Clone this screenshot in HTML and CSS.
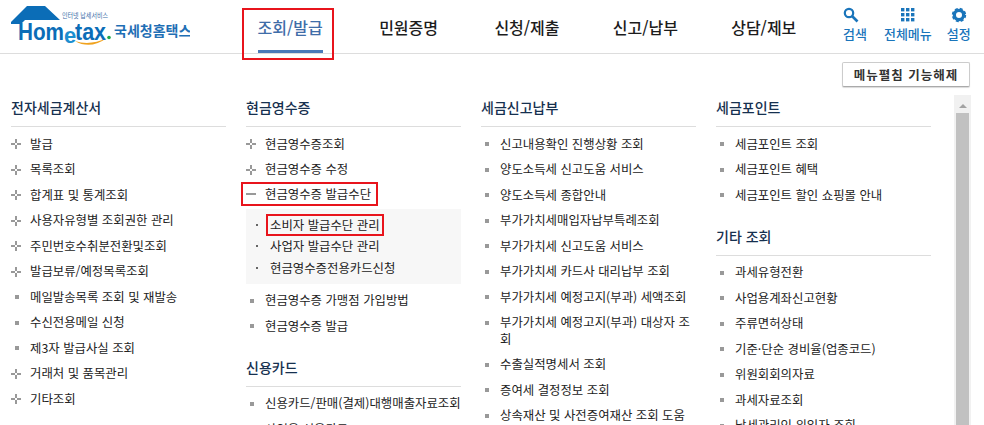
FILE: index.html
```html
<!DOCTYPE html>
<html lang="ko">
<head>
    <meta charset="UTF-8">
    <title>Hometax</title>
    <link rel="stylesheet" href="styles.css">
</head>
<body>
    <div class="header">
        <a class="logo" href="#">
            <svg width="190" height="50" viewBox="0 0 190 50">
                <path d="M11 22 L27 6 L45 6 L60 20 L25 20 L21 24 L11 24 Z" fill="#0b6db7"/>
                <path d="M75 41 Q90 50 107 38 Q90 46 75 41 Z" fill="#f0a21e"/>
                <circle cx="109" cy="37.5" r="1.8" fill="#1fa84a"/>
                <text x="62" y="18" class="logo-small" textLength="46" lengthAdjust="spacingAndGlyphs">인터넷 납세서비스</text>
                <text x="18" y="40" class="logo-home" textLength="46" lengthAdjust="spacingAndGlyphs">Hom</text>
                <text x="64" y="43" class="logo-e">e</text>
                <text x="75" y="40" class="logo-home" textLength="31" lengthAdjust="spacingAndGlyphs">tax</text>
                <text x="114" y="36" class="logo-name">국세청홈택스</text>
            </svg>
        </a>
        <div class="nav">
            <a class="nav-item active" href="#"><span>조회/발급</span></a>
            <a class="nav-item" href="#"><span>민원증명</span></a>
            <a class="nav-item" href="#"><span>신청/제출</span></a>
            <a class="nav-item" href="#"><span>신고/납부</span></a>
            <a class="nav-item" href="#"><span>상담/제보</span></a>
        </div>
        <div class="tools">
            <a class="tool tool-search" href="#">
                <svg width="16" height="16" viewBox="0 0 16 16"><circle cx="6" cy="6" r="4.2" fill="none" stroke="#1a75bb" stroke-width="2.2"/><path d="M9 9 L14.5 14.5" stroke="#1a75bb" stroke-width="2.6"/></svg>
                검색
            </a>
            <a class="tool" href="#">
                <svg width="16" height="16" viewBox="0 0 16 16" fill="#1a75bb">
                    <rect x="1" y="1" width="3.4" height="3.4"/><rect x="6" y="1" width="3.4" height="3.4"/><rect x="11" y="1" width="3.4" height="3.4"/>
                    <rect x="1" y="6" width="3.4" height="3.4"/><rect x="6" y="6" width="3.4" height="3.4"/><rect x="11" y="6" width="3.4" height="3.4"/>
                    <rect x="1" y="11" width="3.4" height="3.4"/><rect x="6" y="11" width="3.4" height="3.4"/><rect x="11" y="11" width="3.4" height="3.4"/>
                </svg>
                전체메뉴
            </a>
            <a class="tool" href="#">
                <svg width="16" height="16" viewBox="0 0 16 16"><circle cx="8" cy="8" r="4.6" fill="none" stroke="#1a75bb" stroke-width="3.2"/><circle cx="8" cy="8" r="6.4" fill="none" stroke="#1a75bb" stroke-width="1.6" stroke-dasharray="3 2.03"/></svg>
                설정
            </a>
        </div>
    </div>

    <div class="toolbar">
        <button class="btn-fold">메뉴펼침 기능해제</button>
    </div>

    <div class="panel">
        <div class="columns">
            <div class="col">
                <h3>전자세금계산서</h3>
                <ul class="menu">
                    <li class="plus">발급</li>
                    <li class="plus">목록조회</li>
                    <li class="plus">합계표 및 통계조회</li>
                    <li class="plus">사용자유형별 조회권한 관리</li>
                    <li class="plus">주민번호수취분전환및조회</li>
                    <li class="plus">발급보류/예정목록조회</li>
                    <li class="square">메일발송목록 조회 및 재발송</li>
                    <li class="square">수신전용메일 신청</li>
                    <li class="square">제3자 발급사실 조회</li>
                    <li class="plus">거래처 및 품목관리</li>
                    <li class="plus">기타조회</li>
                </ul>
            </div>

            <div class="col">
                <h3>현금영수증</h3>
                <ul class="menu">
                    <li class="plus">현금영수증조회</li>
                    <li class="plus">현금영수증 수정</li>
                    <li class="minus marked">현금영수증 발급수단</li>
                </ul>
                <ul class="sub">
                    <li><span class="marked">소비자 발급수단 관리</span></li>
                    <li><span>사업자 발급수단 관리</span></li>
                    <li><span>현금영수증전용카드신청</span></li>
                </ul>
                <ul class="menu">
                    <li class="square">현금영수증 가맹점 가입방법</li>
                    <li class="square">현금영수증 발급</li>
                </ul>
                <h3>신용카드</h3>
                <ul class="menu">
                    <li class="square">신용카드/판매(결제)대행매출자료조회</li>
                    <li class="square">사업용 신용카드</li>
                </ul>
            </div>

            <div class="col">
                <h3>세금신고납부</h3>
                <ul class="menu">
                    <li class="square">신고내용확인 진행상황 조회</li>
                    <li class="square">양도소득세 신고도움 서비스</li>
                    <li class="square">양도소득세 종합안내</li>
                    <li class="square">부가가치세매입자납부특례조회</li>
                    <li class="square">부가가치세 신고도움 서비스</li>
                    <li class="square">부가가치세 카드사 대리납부 조회</li>
                    <li class="square">부가가치세 예정고지(부과) 세액조회</li>
                    <li class="square">부가가치세 예정고지(부과) 대상자 조회</li>
                    <li class="square">수출실적명세서 조회</li>
                    <li class="square">증여세 결정정보 조회</li>
                    <li class="square">상속재산 및 사전증여재산 조회 도움</li>
                </ul>
            </div>

            <div class="col">
                <h3>세금포인트</h3>
                <ul class="menu">
                    <li class="square">세금포인트 조회</li>
                    <li class="square">세금포인트 혜택</li>
                    <li class="square">세금포인트 할인 쇼핑몰 안내</li>
                </ul>
                <h3>기타 조회</h3>
                <ul class="menu">
                    <li class="square">과세유형전환</li>
                    <li class="square">사업용계좌신고현황</li>
                    <li class="square">주류면허상태</li>
                    <li class="square">기준·단순 경비율(업종코드)</li>
                    <li class="square">위원회회의자료</li>
                    <li class="square">과세자료조회</li>
                    <li class="square">납세관리인 위임자 조회</li>
                </ul>
            </div>
        </div>

        <div class="scrollbar">
            <div class="scroll-arrow"></div>
            <div class="scroll-thumb"></div>
        </div>
    </div>
</body>
</html>
```

FILE: styles.css
```css
* {
    box-sizing: border-box;
}

html, body {
    height: 100%;
}

body {
    margin: 0;
    display: flex;
    flex-direction: column;
    overflow: hidden;
    background-color: #fff;
    color: #222;
    font-family: "Noto Sans CJK KR", "Liberation Sans", sans-serif;
    font-size: 12.4px;
}

a {
    color: inherit;
    text-decoration: none;
}

ul {
    list-style: none;
    margin: 0;
    padding: 0;
}

/* header */
.header {
    display: flex;
    flex: none;
    height: 54px;
    border-bottom: 1px solid #ddd;
}

.logo {
    flex: none;
    width: 231px;
    height: 50px;
}

.logo svg {
    display: block;
}

.logo-small {
    font-size: 6.5px;
    fill: #3b6ea8;
}

.logo-home {
    font-family: "Liberation Sans", sans-serif;
    font-size: 24px;
    font-weight: bold;
    fill: #0b6db7;
}

.logo-e {
    font-family: "Liberation Sans", sans-serif;
    font-size: 22px;
    font-weight: bold;
    fill: #1d8fd0;
}

.logo-name {
    font-size: 14px;
    font-weight: 700;
    fill: #1f6fb5;
}

.nav {
    display: flex;
    flex: none;
}

.nav-item {
    position: relative;
    display: flex;
    justify-content: center;
    width: 118.4px;
    height: 53px;
    padding-top: 15px;
    font-size: 16px;
    font-weight: 500;
    color: #1c1c1c;
}

.nav-item.active {
    color: #3f6da8;
}

.nav-item.active span {
    height: 38px;
    border-bottom: 3px solid #4a7ab9;
}

.nav-item.active::after {
    content: "";
    position: absolute;
    left: 11px;
    top: 8px;
    width: 88px;
    height: 48px;
    border: 2px solid #e8141c;
}

.tools {
    display: flex;
    gap: 15px;
    margin-left: 20px;
    padding-top: 7px;
}

.tool {
    display: flex;
    flex-direction: column;
    align-items: center;
    gap: 2px;
    color: #1a75bb;
    font-size: 13px;
    font-weight: 500;
    line-height: 18px;
}

.tool-search {
    margin-right: 2px;
}

.tool-search svg {
    margin-right: 8px;
}

/* button row */
.toolbar {
    display: flex;
    flex: none;
    justify-content: flex-end;
    padding: 8px 14px 8px 0;
}

.btn-fold {
    width: 128px;
    height: 25px;
    padding: 0;
    border: 1px solid #ccc;
    border-bottom-color: #aaa;
    border-radius: 2px;
    background-color: #fff;
    box-shadow: 0 1px 1px rgba(0, 0, 0, 0.15);
    color: #333;
    font-family: inherit;
    font-size: 12.5px;
    font-weight: 700;
    letter-spacing: 1px;
}

/* columns */
.panel {
    display: flex;
    flex: 1;
    min-height: 0;
    padding-left: 11px;
}

.columns {
    display: flex;
    gap: 20px;
}

.col {
    width: 215px;
}

.col h3 {
    height: 32px;
    margin: 16px 0 0;
    border-bottom: 1px solid #ddd;
    color: #16304f;
    font-size: 14px;
    font-weight: 500;
    line-height: 24px;
}

.col h3:first-child {
    margin-top: 0;
}

.col h3 + .menu {
    margin-top: 4px;
}

.menu li {
    display: flex;
    padding: 4.5px 0;
    line-height: 16.5px;
    word-break: break-all;
}

.menu li::before {
    content: "";
    flex: none;
}

.menu li.plus::before {
    width: 10px;
    height: 10px;
    margin: 3.5px 9px 0 0;
    background:
        linear-gradient(#999, #999) 4px 0 / 2px 4px no-repeat,
        linear-gradient(#999, #999) 4px 6px / 2px 4px no-repeat,
        linear-gradient(#999, #999) 0 4px / 4px 2px no-repeat,
        linear-gradient(#999, #999) 6px 4px / 4px 2px no-repeat;
}

.menu li.minus::before {
    width: 10px;
    height: 2px;
    margin: 0 9px 0 0;
    align-self: center;
    background-color: #999;
}

.menu li.square::before {
    width: 4px;
    height: 4px;
    margin: 6.5px 11px 0 4px;
    background-color: #999;
}

.menu li.marked {
    align-items: center;
    width: fit-content;
    height: 24px;
    margin: 0 0 1.5px -5px;
    padding: 0 5px 0 3px;
    border: 2px solid #e8141c;
}

.sub {
    margin: 3px 0 4px;
    padding: 5px 0 5px 10px;
    background-color: #f7f7f7;
}

.sub li {
    display: flex;
    align-items: center;
    height: 21.5px;
}

.sub li::before {
    content: "";
    flex: none;
    width: 2px;
    height: 2px;
    margin-right: 12px;
    background-color: #666;
}

.sub .marked {
    margin-left: -4px;
    padding: 0 2px;
    border: 2px solid #e8141c;
    line-height: 18px;
}

/* fake scrollbar */
.scrollbar {
    flex: none;
    width: 17px;
    margin-left: 23px;
    padding-top: 9px;
    background-color: #f1f1f1;
}

.scroll-arrow {
    width: 0;
    margin: 0 auto 5px;
    border: 4px solid transparent;
    border-top: 0;
    border-bottom: 4px solid #a3a3a3;
}

.scroll-thumb {
    height: 100%;
    margin: 0 2px;
    background-color: #c1c1c1;
}
```
